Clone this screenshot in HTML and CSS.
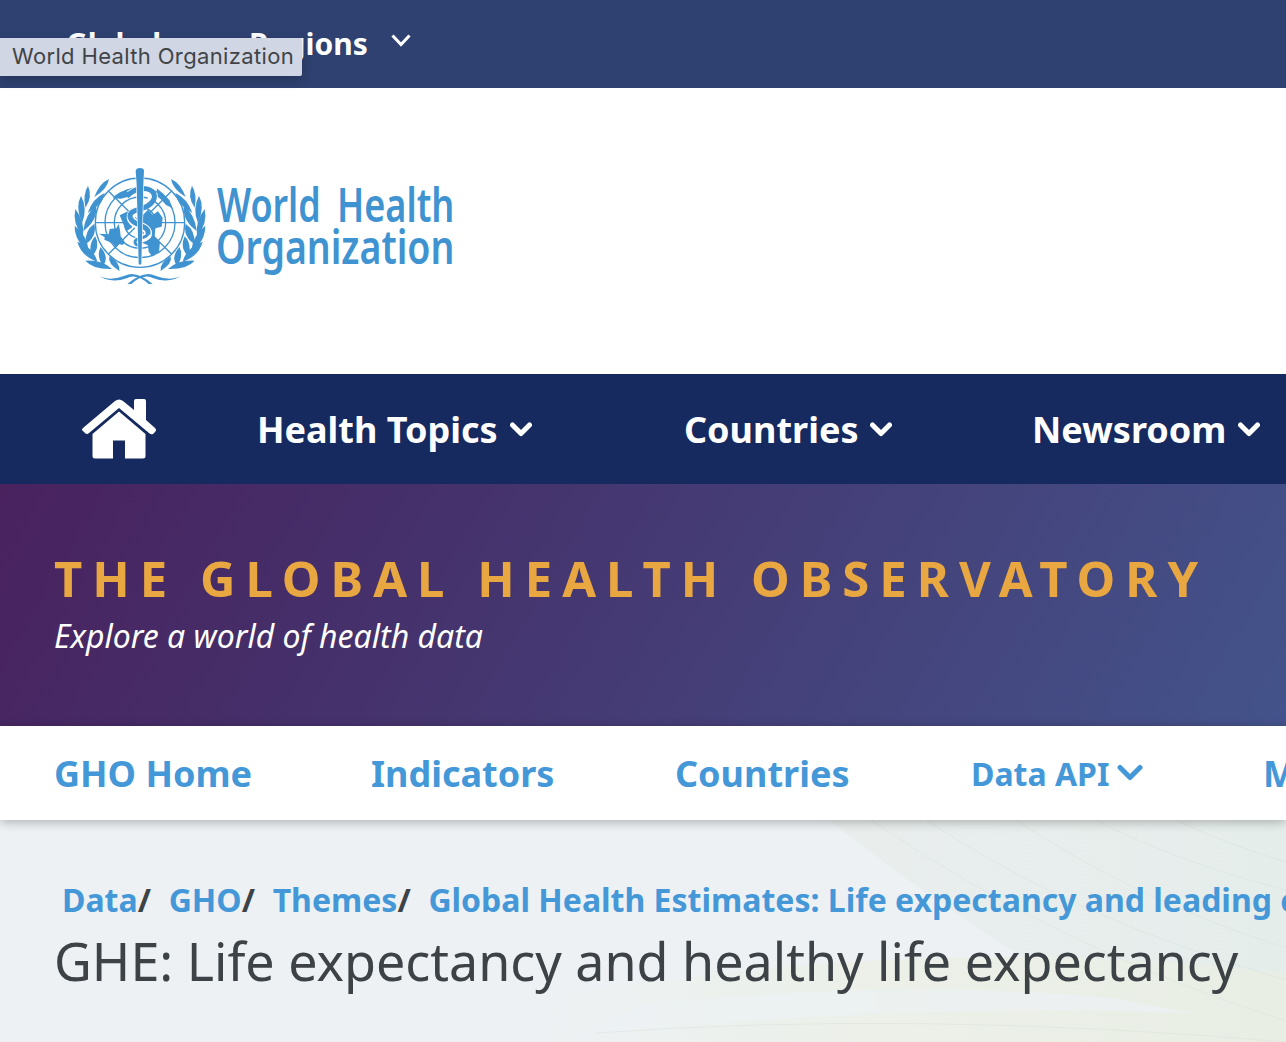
FILE: index.html
```html
<!DOCTYPE html>
<html lang="en">
<head>
<meta charset="utf-8">
<title>GHE: Life expectancy and healthy life expectancy</title>
<link rel="stylesheet" href="styles.css">
</head>
<body>
<div class="topbar">
  <span class="topbar-link global">Global</span>
  <span class="topbar-link regions">Regions</span>
  <svg class="topbar-chevron" width="20" height="13" viewBox="0 0 20 13"><path d="M1.5 1.5 10 10.5 18.500 1.500" fill="none" stroke="#fff" stroke-width="3"/></svg>
  <div class="tooltip">World Health Organization</div>
</div>
<header class="brand">
  <svg class="logo" width="400" height="140" viewBox="0 0 1200 420" fill="#4093d1">
    <defs>
      <g id="laurel">
        <path d="M147 72Q119 84 103 126Q142 102 147 72Z"/>
        <path d="M84 92Q68 118 76 158Q99 126 84 92Z"/>
        <path d="M134 114Q98 130 83 174Q128 150 134 114Z"/>
        <path d="M63 122Q45 156 66 204Q84 162 63 122Z"/>
        <path d="M109 154Q76 176 70 228Q112 198 109 154Z"/>
        <path d="M46 162Q36 204 69 246Q76 200 46 162Z"/>
        <path d="M103 206Q74 226 76 268Q112 244 103 206Z"/>
        <path d="M44 212Q44 260 86 288Q82 242 44 212Z"/>
        <path d="M106 244Q84 266 94 306Q122 280 106 244Z"/>
        <path d="M52 260Q64 304 112 320Q100 276 52 260Z"/>
        <path d="M122 276Q108 302 129 334Q149 308 122 276Z"/>
        <path d="M76 317Q100 344 156 342Q126 314 76 317Z"/>
        <path d="M148 304Q142 326 178 348Q182 324 148 304Z"/>
        <path d="M109 358Q142 382 194 362Q228 344 278 387H266Q228 354 200 370Q150 388 109 358Z"/>
      </g>
    </defs>
    <g fill="none" stroke="#4093d1" stroke-width="4">
      <circle cx="240" cy="203" r="134"/><circle cx="240" cy="203" r="105"/><circle cx="240" cy="203" r="77"/><circle cx="240" cy="203" r="47"/>
      <path d="M106 203H374M145 108 335 298M335 108 145 298"/>
    </g>
    <path d="M117 236 146 238 149 222 169 220 176 207 180 226 182 244 195 262 188 270 177 267 168 278 158 265 133 254 134 247Z"/>
    <path d="M158 130Q178 105 211 105L202 126 183 131ZM179 181 199 171 220 166 224 184 215 218 199 229 190 207Z"/>
    <path d="M245 184 264 164 278 180 294 169 308 188 305 215 286 220 284 245 300 260 297 290 276 304 266 290 264 271 246 263 239 240 245 216Z"/>
    <path d="M290 100 310 116 328 135 338 160 318 150 304 134 294 126Z"/>
    <use href="#laurel"/><use href="#laurel" transform="translate(480 0) scale(-1 1)"/>
    <g fill="none" stroke="#fff" stroke-width="24"><path d="M208 119C250 88 286 108 276 132C262 164 210 160 212 188C218 216 268 210 264 238C260 252 228 250 228 264"/></g>
    <path fill="none" stroke="#4093d1" stroke-width="15" d="M200 124C242 84 292 102 282 132C266 170 206 158 210 186C216 214 270 208 264 238"/>
    <path fill="none" stroke="#4093d1" stroke-width="9" d="M264 236C260 252 226 246 225 260Q225 270 240 272"/>
    <path d="M227 48Q228 39 240 39Q252 39 252 48L250 88 244 326Q240 332 236 326L230 88Z" stroke="#fff" stroke-width="4" paint-order="stroke"/>
    <g class="wordmark"><text x="471" y="201" textLength="311" lengthAdjust="spacingAndGlyphs">World</text><text x="831" y="201" textLength="352" lengthAdjust="spacingAndGlyphs">Health</text><text x="468" y="328" textLength="715" lengthAdjust="spacingAndGlyphs">Organization</text></g>
  </svg>
</header>
<nav class="main-nav">
  <svg class="home" width="74" height="60" viewBox="0 0 74 60" fill="#fff"><path d="M1 29 33 2Q37-1 41 2L52 11V2Q52 0 54 0H62Q64 0 64 2V21L73 29Q75 31 73 33L71 35Q69 36 67 34L37 9 7 34Q5 36 3 34L1 32Q-1 31 1 29Z"/><path d="M37 12.500 63.500 35V57Q63.500 59.500 61 59.500H43V41.500H31V59.500H13Q10.500 59.500 10.500 57V35Z"/></svg>
  <a class="nav-item topics">Health Topics <svg width="22" height="15" viewBox="0 0 22 15"><path d="M2.500 3 11 11.500 19.500 3"/></svg></a>
  <a class="nav-item countries">Countries <svg width="22" height="15" viewBox="0 0 22 15"><path d="M2.500 3 11 11.500 19.500 3"/></svg></a>
  <a class="nav-item newsroom">Newsroom <svg width="22" height="15" viewBox="0 0 22 15"><path d="M2.500 3 11 11.500 19.500 3"/></svg></a>
</nav>
<section class="hero">
  <h2>THE GLOBAL HEALTH OBSERVATORY</h2>
  <p>Explore a world of health data</p>
</section>
<nav class="sub-nav">
  <a class="gho-home">GHO Home</a><a class="indicators">Indicators</a><a class="sub-countries">Countries</a><a class="data-api">Data API <svg width="26" height="18" viewBox="0 0 26 18"><path d="M3 3.500 13 13.500 23 3.500"/></svg></a><a class="more">More</a>
</nav>
<main class="content">
  <svg class="texture" width="800" height="222" viewBox="0 0 800 222">
    <defs><linearGradient id="sweep" x1="0" x2="1"><stop stop-color="#e9eeed"/><stop offset="1" stop-color="#e5edeb"/></linearGradient><linearGradient id="glow"><stop stop-color="#ecf0ea" stop-opacity="0"/><stop offset=".5" stop-color="#ecf0e8"/><stop offset="1" stop-color="#e9eee5"/></linearGradient></defs>
    <path fill="url(#sweep)" d="M343 0H800V222H680Q480 110 343 0Z"/>
    <path fill="url(#glow)" d="M80 174Q460 112 800 154V222H0Z"/>
    <path fill="#edf1f4" opacity=".7" d="M160 184Q420 158 626 178L710 194Q410 181 80 218Z"/>
    <g fill="none" stroke="#d9e2dc" stroke-width="1" opacity=".55"><path d="M385 0Q570 128 800 201M440 0Q590 100 800 160M530 0Q650 80 800 128M610 0Q690 42 800 70M690 0Q740 24 800 42M110 213Q430 190 800 222"/></g>
  </svg>
  <div class="breadcrumb"><a class="crumb-data">Data</a><i>/</i><a class="crumb-gho">GHO</a><i>/</i><a class="crumb-themes">Themes</a><i>/</i><a class="crumb-ghe">Global Health Estimates: Life expectancy and leading causes of death</a></div>
  <h1>GHE: Life expectancy and healthy life expectancy</h1>
</main>
</body>
</html>
```
FILE: styles.css
```css
* { box-sizing: border-box; }
body { margin: 0; width: 1286px; height: 1042px; overflow: hidden; font-family: "Noto Sans", sans-serif; color: #3c4245; background: #fff; }
a, span, h1, h2, p, i { white-space: nowrap; }
.topbar { position: relative; display: flex; height: 88px; padding-left: 66px; background: #2e4170; color: #fff; font-weight: 700; font-size: 30px; line-height: 88px; }
.global { width: 183px; }
.regions { width: 142px; }
.topbar-chevron { margin-top: 34px; }
.tooltip { position: absolute; left: 0; top: 38px; width: 302px; height: 38px; padding-left: 12px; border-radius: 0 2px 2px 0; background: #d0d6e3; color: #414447; font: 400 22px/37px Inter, sans-serif; letter-spacing: .35px; box-shadow: 0 4px 12px rgba(0, 0, 0, .2); white-space: nowrap; }
.brand { height: 286px; padding: 67px 0 0 60px; }
.logo { display: block; }
.wordmark { font: 600 138px "Noto Sans", sans-serif; }
.main-nav { display: flex; align-items: center; height: 110px; padding-left: 82px; background: #162a60; color: #fff; }
.home { flex: none; margin-right: 101px; }
.nav-item { flex: none; display: flex; align-items: center; gap: 12px; font-size: 36px; font-weight: 700; }
.nav-item svg, .data-api svg { fill: none; stroke: currentColor; stroke-width: 5; stroke-linecap: round; stroke-linejoin: round; }
.topics { width: 427px; }
.countries { width: 348px; }
.hero { height: 242px; padding: 61px 54px 0; background: linear-gradient(120deg, #49225e 0%, #452f6a 28%, #453c75 53%, #44538b 100%); color: #fff; }
.hero h2 { margin: 0; color: #e9a741; font-size: 49px; line-height: 66px; letter-spacing: 10px; }
.hero p { margin: 4px 0 0; font-size: 32px; line-height: 42px; font-style: italic; }
.sub-nav { position: relative; z-index: 1; display: flex; align-items: center; height: 94px; padding-left: 54px; background: #fff; color: #4598d8; font-size: 36px; font-weight: 700; box-shadow: 0 2px 10px rgba(0, 0, 0, .28); }
.sub-nav a { flex: none; }
.gho-home { width: 317px; }
.indicators { width: 304px; }
.sub-countries { width: 296px; }
.data-api { display: flex; align-items: center; gap: 8px; width: 292px; font-size: 32px; }
.content { position: relative; height: 222px; padding: 58px 0 0 54px; background: #edf1f4; overflow: hidden; }
.texture { position: absolute; right: 0; top: 0; }
.breadcrumb { position: relative; display: flex; padding-left: 8px; color: #4598d8; font-size: 32px; line-height: 44px; font-weight: 700; }
.breadcrumb i { flex: none; width: 31px; color: #3c4245; font-style: normal; }
.crumb-data { width: 97px; }
.crumb-gho { width: 93px; }
.crumb-themes { width: 145px; }
h1 { position: relative; margin: 3px 0 0; font-size: 52px; line-height: 71px; font-weight: 400; }
```
